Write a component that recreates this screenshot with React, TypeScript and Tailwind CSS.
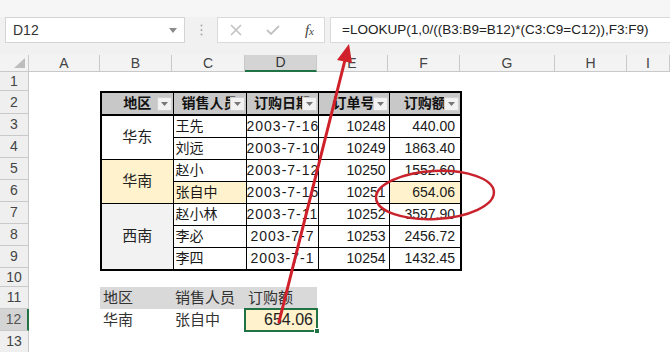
import React from "react";

const cols = [
  { l: "A", w: "w-[71px]" },
  { l: "B", w: "w-[72px]" },
  { l: "C", w: "w-[73px]" },
  { l: "D", w: "w-[72px]" },
  { l: "E", w: "w-[71px]" },
  { l: "F", w: "w-[72px]" },
  { l: "G", w: "w-[95px]" },
  { l: "H", w: "w-[72px]" },
  { l: "I", w: "flex-1" },
];

const rowHeights = [
  "h-[19px]",
  "h-[23px]",
  "h-[22px]",
  "h-[22px]",
  "h-[22px]",
  "h-[22px]",
  "h-[22px]",
  "h-[22px]",
  "h-[22px]",
  "h-[19px]",
  "h-[22px]",
  "h-[22px]",
  "h-[22px]",
];

function Filter() {
  return (
    <span className="absolute right-[1px] top-1/2 -translate-y-1/2 w-[15px] h-[14px] bg-[#f2f2f2] border border-[#cfcfcf] flex items-center justify-center">
      <svg width="7" height="4" viewBox="0 0 7 4">
        <polygon points="0,0 7,0 3.5,4" fill="#777" />
      </svg>
    </span>
  );
}

function HeadCell({ text }: { text: string }) {
  return (
    <th className="relative p-0 border border-black border-b-2 bg-[#c8c8c8] font-bold text-[14px] text-[#111] overflow-hidden whitespace-nowrap text-center">
      <span className="block overflow-hidden">{text}</span>
      <Filter />
    </th>
  );
}

const rows = [
  { c: "王先", d: "2003-7-16", e: "10248", f: "440.00" },
  { c: "刘远", d: "2003-7-10", e: "10249", f: "1863.40" },
  { c: "赵小", d: "2003-7-12", e: "10250", f: "1552.60" },
  { c: "张自中", d: "2003-7-15", e: "10251", f: "654.06", hl: true },
  { c: "赵小林", d: "2003-7-11", e: "10252", f: "3597.90" },
  { c: "李必", d: "2003-7-7", e: "10253", f: "2456.72" },
  { c: "李四", d: "2003-7-1", e: "10254", f: "1432.45" },
];

const num = "font-['Liberation_Sans_Narrow','Liberation_Sans',sans-serif]";

export default function App() {
  return (
    <div className="relative w-[670px] h-[352px] overflow-hidden bg-white font-['Liberation_Sans','Noto_Sans_CJK_SC',sans-serif] text-[#222]">
      {/* formula bar area */}
      <div className="h-[55px] bg-[#f1f1f1] flex flex-col">
        <div className="h-[17px] bg-[#f6f6f6]" />
        <div className="flex h-[26px]">
          <div className="ml-[5px] w-[180px] bg-white border border-[#d4d4d4] flex items-center justify-between pl-[7px] pr-[7px] text-[14px] text-[#333]">
            <span>D12</span>
            <svg width="8" height="5" viewBox="0 0 8 5">
              <polygon points="0,0 8,0 4,5" fill="#8a8a8a" />
            </svg>
          </div>
          <div className="w-[32px] flex items-center justify-center">
            <svg width="3" height="12" viewBox="0 0 3 12">
              <circle cx="1.5" cy="1.5" r="1" fill="#a8a8a8" />
              <circle cx="1.5" cy="6" r="1" fill="#a8a8a8" />
              <circle cx="1.5" cy="10.5" r="1" fill="#a8a8a8" />
            </svg>
          </div>
          <div className="w-[108px] bg-white border border-[#dadada] flex items-center pl-[12px] pr-[10px] justify-between">
            <svg width="12" height="12" viewBox="0 0 12 12">
              <path d="M1 1 L11 11 M11 1 L1 11" stroke="#c2c2c2" strokeWidth="1.6" />
            </svg>
            <svg width="14" height="12" viewBox="0 0 14 12">
              <path d="M1 6 L5 10 L13 2" stroke="#c2c2c2" strokeWidth="1.8" fill="none" />
            </svg>
            <span className="italic font-['Liberation_Serif',serif] text-[15px] text-[#444] leading-none">
              f<span className="text-[11px]">x</span>
            </span>
          </div>
          <div className="ml-[5px] flex-1 bg-white border-l border-y border-[#dadada] flex items-center pl-[11px] text-[13.5px] text-[#222] whitespace-nowrap">
            =LOOKUP(1,0/((B3:B9=B12)*(C3:C9=C12)),F3:F9)
          </div>
        </div>
        <div className="flex-1" />
      </div>

      {/* column headers */}
      <div className="flex h-[17px] bg-[#f3f3f3]">
        <div className="w-[29px] h-full border-r border-b border-[#c9c9c9] flex items-end justify-end pr-[3px] pb-[3px]">
          <svg width="11" height="10" viewBox="0 0 11 10">
            <polygon points="11,0 11,10 0,10" fill="#bdbdbd" />
          </svg>
        </div>
        {cols.map((c) =>
          c.l === "D" ? (
            <div
              key={c.l}
              className={`${c.w} h-full bg-[#d4d4d4] border-r border-[#c9c9c9] border-b-2 border-b-[#217346] flex items-center justify-center text-[14px] text-[#333]`}
            >
              {c.l}
            </div>
          ) : (
            <div
              key={c.l}
              className={`${c.w} h-full border-r border-b border-[#c9c9c9] flex items-center justify-center text-[14px] text-[#444]`}
            >
              {c.l}
            </div>
          )
        )}
      </div>

      {/* body */}
      <div className="flex">
        <div className="w-[29px] shrink-0 flex flex-col bg-[#efefef]">
          {rowHeights.map((h, i) =>
            i === 11 ? (
              <div
                key={i}
                className={`${h} bg-[#d4d4d4] border-b border-[#c9c9c9] border-r-2 border-r-[#217346] flex items-center justify-center text-[14px] text-[#555]`}
              >
                {i + 1}
              </div>
            ) : (
              <div
                key={i}
                className={`${h} border-b border-r border-[#c9c9c9] flex items-center justify-center text-[14px] text-[#444]`}
              >
                {i + 1}
              </div>
            )
          )}
        </div>

        <div className="grid grid-cols-[71px_72px_73px_72px_71px_72px_95px_72px_1fr] grid-rows-[19px_23px_22px_22px_22px_22px_22px_22px_22px_19px_22px_22px_22px] flex-1">
          {/* main table */}
          <div className="col-start-2 col-span-5 row-start-2 row-span-8">
            <table className="w-full h-full border-collapse border-2 border-black table-fixed">
              <colgroup>
                <col className="w-[72px]" />
                <col className="w-[73px]" />
                <col className="w-[72px]" />
                <col className="w-[71px]" />
                <col className="w-[72px]" />
              </colgroup>
              <thead>
                <tr className="h-[23px]">
                  <HeadCell text="地区" />
                  <HeadCell text="销售人员" />
                  <HeadCell text="订购日期" />
                  <HeadCell text="订单号" />
                  <HeadCell text="订购额" />
                </tr>
              </thead>
              <tbody>
                {rows.map((r, i) => (
                  <tr key={i} className="h-[22px]">
                    {i === 0 && (
                      <td rowSpan={2} className="p-0 border border-black bg-white text-center text-[15px] text-[#222]">
                        华东
                      </td>
                    )}
                    {i === 2 && (
                      <td rowSpan={2} className="p-0 border border-black bg-[#fff2cc] text-center text-[15px] text-[#222]">
                        华南
                      </td>
                    )}
                    {i === 4 && (
                      <td rowSpan={3} className="p-0 border border-black bg-[#f2f2f2] text-center text-[15px] text-[#222]">
                        西南
                      </td>
                    )}
                    <td
                      className={`p-0 pl-[2px] border border-black text-[14px] text-[#1a1a1a] whitespace-nowrap overflow-hidden ${
                        r.hl ? "bg-[#fff2cc]" : "bg-white"
                      }`}
                    >
                      {r.c}
                    </td>
                    <td className={`p-0 pr-[3px] border border-black text-right text-[14px] tracking-[1px] whitespace-nowrap overflow-hidden text-[#1a1a1a] ${num}`}>
                      {r.d}
                    </td>
                    <td className={`p-0 pr-[3px] border border-black text-right text-[14px] text-[#1a1a1a] ${num}`}>
                      {r.e}
                    </td>
                    <td
                      className={`p-0 pr-[5px] border border-black text-right text-[14px] text-[#1a1a1a] ${num} ${
                        r.hl ? "bg-[#fff2cc]" : "bg-white"
                      }`}
                    >
                      {r.f}
                    </td>
                  </tr>
                ))}
              </tbody>
            </table>
          </div>

          {/* lookup header row 11 */}
          <div className="col-start-2 row-start-11 bg-[#d9d9d9] flex items-center pl-[3px] text-[15px] text-[#333]">地区</div>
          <div className="col-start-3 row-start-11 bg-[#d9d9d9] flex items-center pl-[3px] text-[15px] text-[#333]">销售人员</div>
          <div className="col-start-4 row-start-11 bg-[#d9d9d9] flex items-center pl-[3px] text-[15px] text-[#333]">订购额</div>

          {/* lookup row 12 */}
          <div className="col-start-2 row-start-12 flex items-center pl-[3px] text-[15px] text-[#333]">华南</div>
          <div className="col-start-3 row-start-12 flex items-center pl-[3px] text-[15px] text-[#333]">张自中</div>
          <div className={`col-start-4 row-start-12 relative bg-[#fff2cc] flex items-center justify-end pr-[4px] text-[16px] text-[#222] ${num}`}>
            654.06
            <div className="absolute -inset-[1px] border-2 border-[#217346]" />
            <div className="absolute -right-[3px] -bottom-[3px] w-[6px] h-[6px] bg-[#217346] border border-white" />
          </div>
        </div>
      </div>

      {/* annotations */}
      <svg className="absolute inset-0 pointer-events-none" width="670" height="352" viewBox="0 0 670 352">
        <line x1="279" y1="322" x2="345" y2="60" stroke="#d0202a" strokeWidth="3" strokeLinecap="round" />
        <polygon points="349,44 352,63 337,60" fill="#d0202a" />
        <ellipse
          cx="435"
          cy="195"
          rx="59"
          ry="24"
          fill="none"
          stroke="#c8232c"
          strokeWidth="2.5"
          transform="rotate(-3 435 195)"
        />
      </svg>
    </div>
  );
}
